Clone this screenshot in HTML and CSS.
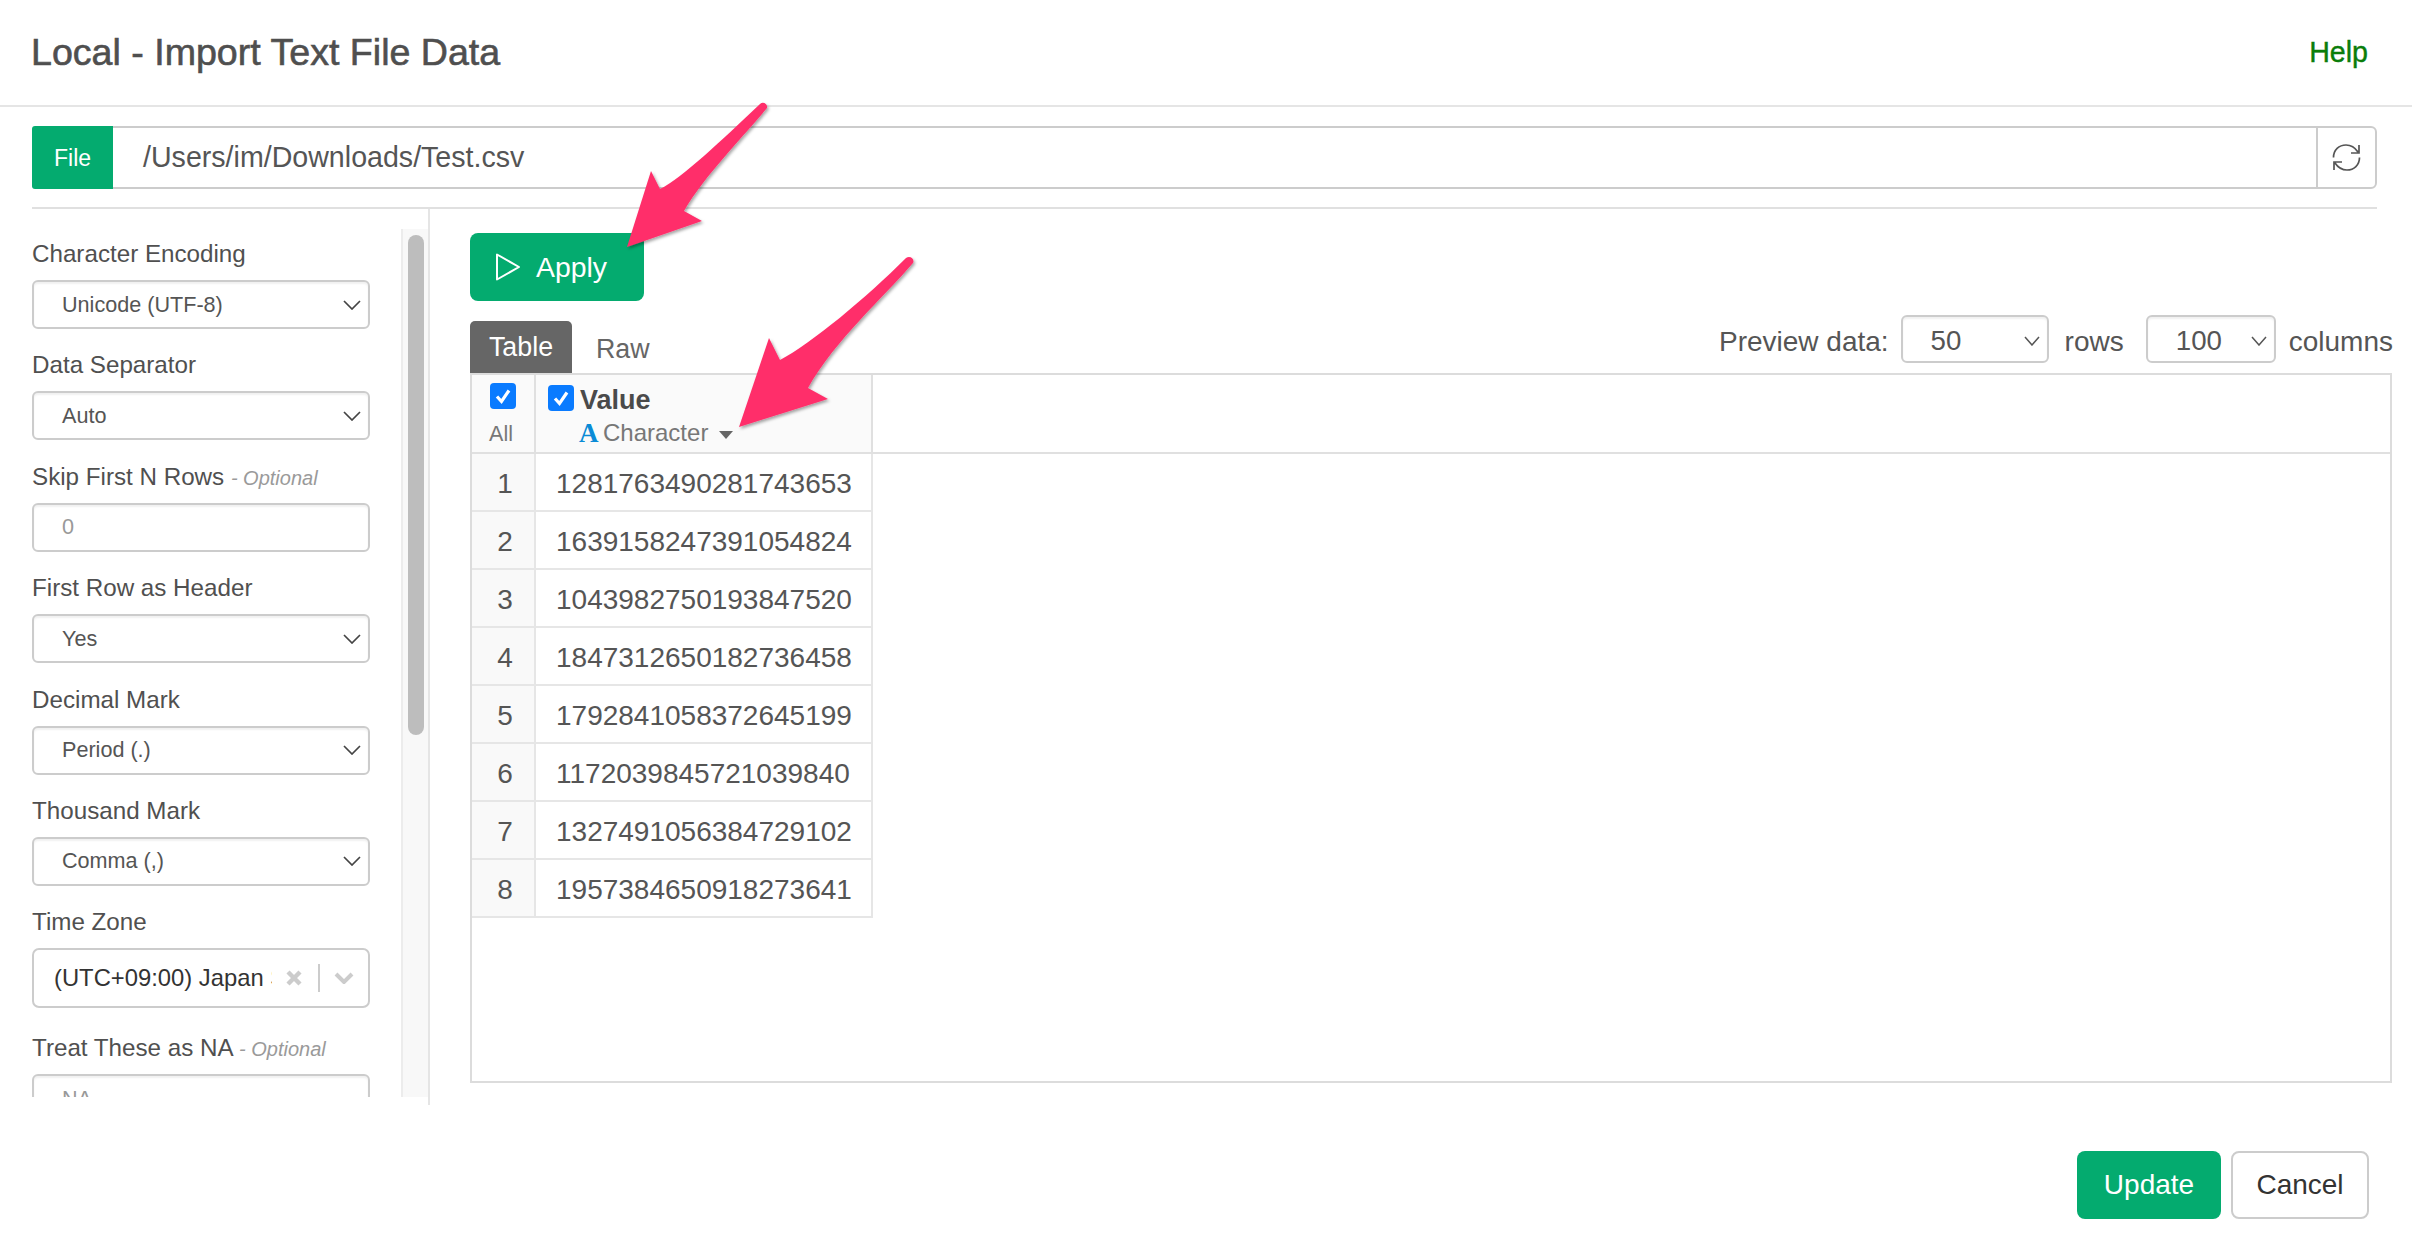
FILE: index.html
```html
<!DOCTYPE html>
<html lang="en">
<head>
<meta charset="utf-8">
<title>Local - Import Text File Data</title>
<link rel="stylesheet" href="styles.css">
</head>
<body>
<div class="modal">
  <header class="head">
    <h1 class="title">Local - Import Text File Data</h1>
    <a class="help">Help</a>
  </header>

  <div class="file-row">
    <span class="file-label">File</span>
    <div class="file-path">/Users/im/Downloads/Test.csv</div>
    <button class="refresh" aria-label="Refresh">
      <svg class="refresh-icon" viewBox="0 0 29 27"><path d="M1.5 13.5C1.5 6 7 1 14 1c5 0 9 2.5 12 7M27 1v8h-8M27.5 13.5C27.5 21 22 26 15 26c-5 0-9-2.500-12-7M2 26v-8h8"/></svg>
    </button>
  </div>

  <div class="body">
    <aside class="side">
      <div class="form">
        <div class="field">
          <label class="label">Character Encoding</label>
          <div class="select"><span>Unicode (UTF-8)</span><svg class="chev" viewBox="0 0 18 10"><path d="M1 1l8 8 8-8"/></svg></div>
        </div>
        <div class="field">
          <label class="label">Data Separator</label>
          <div class="select"><span>Auto</span><svg class="chev" viewBox="0 0 18 10"><path d="M1 1l8 8 8-8"/></svg></div>
        </div>
        <div class="field">
          <label class="label">Skip First N Rows <em class="opt">- Optional</em></label>
          <div class="select placeholder"><span>0</span></div>
        </div>
        <div class="field">
          <label class="label">First Row as Header</label>
          <div class="select"><span>Yes</span><svg class="chev" viewBox="0 0 18 10"><path d="M1 1l8 8 8-8"/></svg></div>
        </div>
        <div class="field">
          <label class="label">Decimal Mark</label>
          <div class="select"><span>Period (.)</span><svg class="chev" viewBox="0 0 18 10"><path d="M1 1l8 8 8-8"/></svg></div>
        </div>
        <div class="field">
          <label class="label">Thousand Mark</label>
          <div class="select"><span>Comma (,)</span><svg class="chev" viewBox="0 0 18 10"><path d="M1 1l8 8 8-8"/></svg></div>
        </div>
        <div class="field field-tall">
          <label class="label">Time Zone</label>
          <div class="combo">
            <span class="combo-text">(UTC+09:00) Japan Standard Time</span>
            <svg class="combo-x" viewBox="0 0 16 16"><path d="M2 2l12 12M14 2L2 14"/></svg>
            <span class="combo-sep"></span>
            <svg class="combo-chev" viewBox="0 0 20 12"><path d="M2 2l8 8 8-8"/></svg>
          </div>
        </div>
        <div class="field">
          <label class="label">Treat These as NA <em class="opt">- Optional</em></label>
          <div class="select placeholder"><span>NA</span></div>
        </div>
      </div>
      <div class="scroll"><div class="thumb"></div></div>
    </aside>

    <main class="main">
      <button class="apply">
        <svg class="play" viewBox="0 0 26 30"><path d="M2 2.500v25L24 15z"/></svg>
        <span>Apply</span>
      </button>

      <div class="tabrow">
        <div class="tabs">
          <span class="tab active">Table</span>
          <span class="tab">Raw</span>
        </div>
        <div class="preview">
          <span class="preview-label">Preview data:</span>
          <div class="mini mini-rows"><span>50</span><svg class="mini-chev" viewBox="0 0 16 10"><path d="M1 1l7 8 7-8"/></svg></div>
          <span class="preview-unit">rows</span>
          <div class="mini mini-cols"><span>100</span><svg class="mini-chev" viewBox="0 0 16 10"><path d="M1 1l7 8 7-8"/></svg></div>
          <span class="preview-unit">columns</span>
        </div>
      </div>

      <div class="frame">
        <table class="grid">
          <thead>
            <tr>
              <th class="th-all">
                <span class="check check-all"><svg viewBox="0 0 26 26"><path d="M7 13.500l4.500 5L19 7.500"/></svg></span>
                <span class="all-text">All</span>
              </th>
              <th class="th-col">
                <div class="col-name">
                  <span class="check"><svg viewBox="0 0 26 26"><path d="M7 13.500l4.500 5L19 7.500"/></svg></span>
                  <span class="col-title">Value</span>
                </div>
                <div class="col-type">
                  <span class="type-a">A</span><span class="type-name">Character</span><span class="caret"></span>
                </div>
              </th>
              <th class="th-rest"></th>
            </tr>
          </thead>
          <tbody>
            <tr><td class="num">1</td><td class="val">1281763490281743653</td></tr>
            <tr><td class="num">2</td><td class="val">1639158247391054824</td></tr>
            <tr><td class="num">3</td><td class="val">1043982750193847520</td></tr>
            <tr><td class="num">4</td><td class="val">1847312650182736458</td></tr>
            <tr><td class="num">5</td><td class="val">1792841058372645199</td></tr>
            <tr><td class="num">6</td><td class="val">1172039845721039840</td></tr>
            <tr><td class="num">7</td><td class="val">1327491056384729102</td></tr>
            <tr><td class="num">8</td><td class="val">1957384650918273641</td></tr>
          </tbody>
        </table>
      </div>
    </main>
  </div>

  <footer class="foot">
    <button class="btn btn-primary">Update</button>
    <button class="btn btn-plain">Cancel</button>
  </footer>

  <svg class="arrows" viewBox="0 0 2412 1242" aria-hidden="true">
    <defs>
      <filter id="sh" x="-20%" y="-20%" width="140%" height="140%">
        <feDropShadow dx="1.500" dy="2" stdDeviation="1.500" flood-color="#000" flood-opacity=".35"/>
      </filter>
    </defs>
    <path class="arrow" filter="url(#sh)" d="M627 247L651 171L660 189C682 178 722 140 760 104C763 101 768 104 767 108C745 135 705 175 684 211L702 221Z"/>
    <path class="arrow" filter="url(#sh)" d="M739 427L769 338L780 360C812 343 866 298 906 258C910 255 915 259 913 263C885 296 835 340 808 388L828 399Z"/>
  </svg>
</div>
</body>
</html>
```
FILE: styles.css
```css
* { box-sizing: border-box; }
html, body { margin: 0; padding: 0; background: #fff; }
body { font-family: "Liberation Sans", Arial, sans-serif; color: #505050; overflow: hidden; }

.modal { position: relative; width: 2412px; height: 1242px; display: flex; flex-direction: column; }

.head { height: 107px; flex: none; display: flex; align-items: center; justify-content: space-between; padding: 0 44px 0 31px; border-bottom: 2px solid #e5e5e5; }
.title { margin: 0; font-size: 37.6px; font-weight: 400; color: #4f4f4f; -webkit-text-stroke: .6px #4f4f4f; }
.help { font-size: 28.6px; color: #0a7d0a; -webkit-text-stroke: .4px #0a7d0a; }

.file-row { flex: none; height: 63px; margin: 19px 35px 0 32px; display: flex; }
.file-label { width: 81px; flex: none; display: flex; align-items: center; justify-content: center; padding-top: 2px; background: #04ab6f; color: #fff; font-size: 23px; border-radius: 3px 0 0 3px; }
.file-path { flex: 1; display: flex; align-items: center; padding-left: 30px; font-size: 28.6px; color: #555; border-top: 2px solid #ccc; border-bottom: 2px solid #ccc; }
.refresh { width: 61px; flex: none; padding: 0; display: flex; align-items: center; justify-content: center; background: #fff; border: 2px solid #ccc; border-radius: 0 6px 6px 0; }
.refresh-icon { width: 29px; height: 27px; fill: none; stroke: #555; stroke-width: 1.7; }

.body { flex: none; height: 898px; margin: 18px 35px 0 32px; display: flex; border-top: 2px solid #e0e0e0; }

.side { width: 398px; flex: none; display: flex; align-items: flex-start; border-right: 2px solid #e5e5e5; }
.form { width: 369px; height: 868px; margin-top: 20px; padding: 11px 31px 0 0; overflow: hidden; flex: none; }
.field { margin-bottom: 22.4px; }
.field-tall { margin-bottom: 26px; }
.label { display: block; height: 40px; font-size: 24.2px; line-height: 28px; color: #505050; white-space: nowrap; }
.opt { font-size: 20px; color: #9a9a9a; }

.select { height: 49px; display: flex; align-items: center; justify-content: space-between; padding: 0 7px 0 28px; border: 2px solid #ccc; border-radius: 6px; box-shadow: inset 0 2px 2px rgba(0,0,0,.06); font-size: 21.6px; color: #555; }
.placeholder { color: #999; }
.chev { width: 18px; height: 10px; fill: none; stroke: #444; stroke-width: 1.7; }

.combo { height: 60px; display: flex; align-items: center; padding-left: 20px; border: 2px solid #ccc; border-radius: 7px; }
.combo-text { width: 218px; flex: none; overflow: hidden; white-space: nowrap; font-size: 23.8px; color: #333; }
.combo-x { width: 16px; height: 16px; margin-left: 14px; fill: none; stroke: #ccc; stroke-width: 4.4; }
.combo-sep { width: 2px; height: 28px; margin-left: 16px; background: #ccc; }
.combo-chev { width: 20px; height: 12px; margin-left: 14px; fill: none; stroke: #ccc; stroke-width: 4; }

.scroll { width: 27px; height: 868px; margin-top: 20px; flex: none; padding: 6px 4px 0 7px; background: #f8f8f8; border-left: 2px solid #ececec; }
.thumb { width: 16px; height: 500px; margin-left: -2px; background: #bdbdbd; border-radius: 8px; }

.main { flex: 1; min-width: 0; margin-right: -15px; padding: 24px 0 22px 40px; display: flex; flex-direction: column; }

.apply { width: 174px; height: 68px; flex: none; padding: 0 0 0 25px; display: flex; align-items: center; gap: 15px; background: #04ab6f; border: 0; border-radius: 8px; color: #fff; font: 28.4px "Liberation Sans", Arial, sans-serif; }
.play { width: 26px; height: 30px; fill: none; stroke: #fff; stroke-width: 2; stroke-linejoin: round; }

.tabrow { flex: none; height: 58px; margin-top: 14px; display: flex; justify-content: space-between; }
.tabs { display: flex; align-self: flex-end; align-items: center; }
.tab { height: 52px; display: flex; align-items: center; padding: 4px 0 0 24px; font-size: 26.8px; color: #666; }
.tab.active { width: 102px; padding: 0; justify-content: center; background: #666; color: #fff; border-radius: 5px 5px 0 0; }
.preview { display: flex; align-items: flex-start; height: 48px; margin-right: -1px; font-size: 28px; color: #555; }
.preview-label { line-height: 54px; margin-right: 12px; }
.preview-unit { line-height: 54px; margin: 0 22px 0 16px; }
.preview-unit:last-child { margin: 0 0 0 13px; }
.mini { height: 48px; display: flex; align-items: center; justify-content: space-between; padding: 3px 7px 0 28px; border: 2px solid #ccc; border-radius: 6px; box-shadow: inset 0 2px 2px rgba(0,0,0,.06); font-size: 27.7px; }
.mini-rows { width: 148px; }
.mini-cols { width: 130px; }
.mini-chev { width: 16px; height: 10px; fill: none; stroke: #555; stroke-width: 1.5; }

.frame { flex: 1; min-height: 0; border: 2px solid #dcdcdc; }
.grid { width: 100%; table-layout: fixed; border-collapse: separate; border-spacing: 0; }
.grid th { height: 79px; padding: 0; vertical-align: top; font-weight: 400; border-bottom: 2px solid #e0e0e0; }
.th-all { width: 64px; background: #fafafa; border-right: 2px solid #e0e0e0; text-align: center; }
.th-col { width: 337px; background: #fafafa; border-right: 2px solid #e0e0e0; text-align: left; }

.check { width: 26px; height: 26px; flex: none; display: block; background: #0a7bff; border-radius: 4px; }
.check svg { display: block; width: 26px; height: 26px; fill: none; stroke: #fff; stroke-width: 3.2; }
.check-all { margin: 8px auto 0 18px; }
.all-text { display: block; margin: 12px 0 0 -4px; font-size: 21.5px; color: #777; line-height: 26px; }

.col-name { display: flex; align-items: flex-start; margin: 10px 0 0 12px; }
.col-title { margin-left: 6px; padding-top: 2px; font-size: 27px; font-weight: 700; color: #4a4a4a; line-height: 26px; }
.col-type { display: flex; align-items: center; height: 26px; margin: 7px 0 0 43px; }
.type-a { font: 700 27px "Liberation Serif", serif; color: #0a8bd6; width: 24px; }
.type-name { font-size: 24px; color: #777; }
.caret { width: 0; height: 0; margin: 3px 0 0 11px; border-left: 7px solid transparent; border-right: 7px solid transparent; border-top: 8px solid #666; }

.grid td { height: 58px; padding: 4px 0 0; font-size: 28px; color: #555; border-bottom: 2px solid #e6e6e6; }
.num { background: #f9f9f9; border-right: 2px solid #e6e6e6; text-align: center; }
.grid .num { padding-left: 4px; }
.val { border-right: 2px solid #e6e6e6; }
.grid .val { padding-left: 20px; }

.foot { flex: 1; display: flex; justify-content: flex-end; align-items: flex-start; gap: 10px; padding: 46px 43px 0 0; }
.btn { height: 68px; padding: 0; border-radius: 8px; font: 28px "Liberation Sans", Arial, sans-serif; }
.btn-primary { width: 144px; background: #04ab6f; border: 0; color: #fff; }
.btn-plain { width: 138px; background: #fff; border: 2px solid #ccc; color: #333; }

.arrows { position: absolute; left: 0; top: 0; width: 2412px; height: 1242px; pointer-events: none; }
.arrow { fill: #ff2f6b; }
```
